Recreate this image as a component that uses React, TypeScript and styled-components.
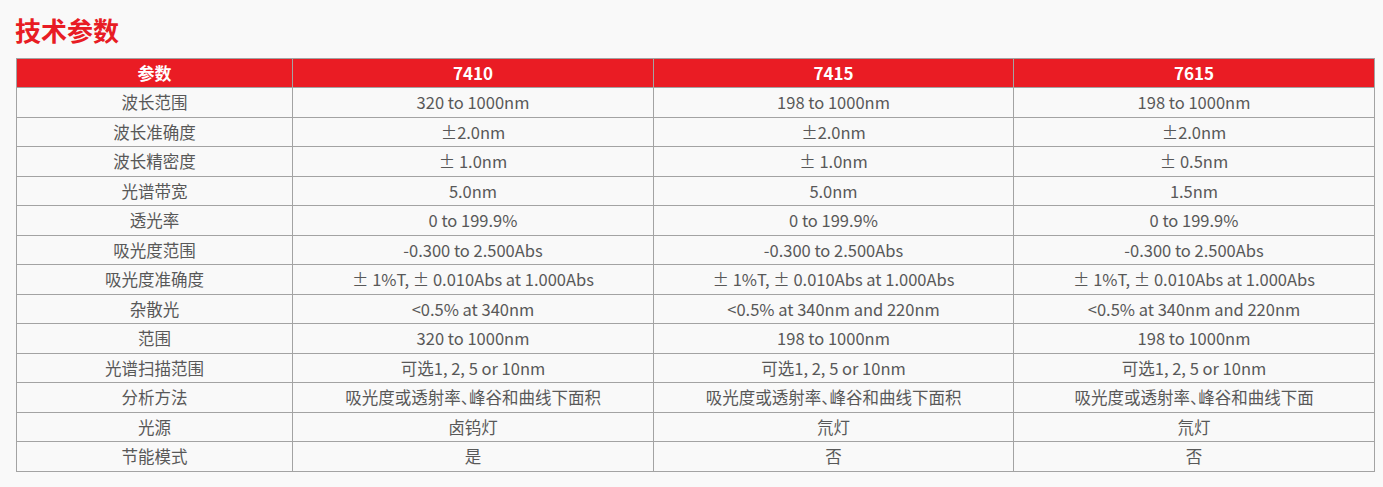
import React from 'react';
import styled, { createGlobalStyle } from 'styled-components';

const GlobalStyle = createGlobalStyle`
  html, body {
    margin: 0;
    padding: 0;
    background: #f9f9f9;
  }
  body {
    font-family: "Noto Sans CJK SC", "Noto Sans", sans-serif;
  }
`;

const models = ['7410', '7415', '7615'];
const colWidths = [276, 361, 360, 361];

const rows: [string, string, string, string][] = [
  ['波长范围', '320 to 1000nm', '198 to 1000nm', '198 to 1000nm'],
  ['波长准确度', '±2.0nm', '±2.0nm', '±2.0nm'],
  ['波长精密度', '± 1.0nm', '± 1.0nm', '± 0.5nm'],
  ['光谱带宽', '5.0nm', '5.0nm', '1.5nm'],
  ['透光率', '0 to 199.9%', '0 to 199.9%', '0 to 199.9%'],
  ['吸光度范围', '-0.300 to 2.500Abs', '-0.300 to 2.500Abs', '-0.300 to 2.500Abs'],
  ['吸光度准确度', '± 1%T, ± 0.010Abs at 1.000Abs', '± 1%T, ± 0.010Abs at 1.000Abs', '± 1%T, ± 0.010Abs at 1.000Abs'],
  ['杂散光', '<0.5% at 340nm', '<0.5% at 340nm and 220nm', '<0.5% at 340nm and 220nm'],
  ['范围', '320 to 1000nm', '198 to 1000nm', '198 to 1000nm'],
  ['光谱扫描范围', '可选1, 2, 5 or 10nm', '可选1, 2, 5 or 10nm', '可选1, 2, 5 or 10nm'],
  ['分析方法', '吸光度或透射率、峰谷和曲线下面积', '吸光度或透射率、峰谷和曲线下面积', '吸光度或透射率、峰谷和曲线下面'],
  ['光源', '卤钨灯', '氘灯', '氘灯'],
  ['节能模式', '是', '否', '否'],
];

const Page = styled.div`
  padding: 12px 10px 16px 16px;
`;

const Title = styled.h2`
  margin: 0 0 10px -1px;
  font-size: 26px;
  line-height: 36px;
  font-weight: 700;
  color: #e81c24;
`;

const SpecTable = styled.table`
  width: 1358px;
  border-collapse: collapse;
  table-layout: fixed;
  background: #f9f9f9;
`;

const Col = styled.col<{ $w: number }>`
  width: ${(p) => p.$w}px;
`;

const HeadCell = styled.th`
  background: #ea1c24;
  color: #ffffff;
  font-size: 17px;
  font-weight: 700;
  height: 28px;
  line-height: 28px;
  padding: 0;
  text-align: center;
  border: 1px solid #a3a3a3;
  border-left-color: #f5b5b8;
  &:first-child {
    border-left-color: #a3a3a3;
  }
`;

const Cell = styled.td`
  color: #585858;
  font-size: 16.5px;
  height: 28.5px;
  line-height: 24px;
  padding: 0;
  text-align: center;
  border: 1px solid #a3a3a3;
  white-space: nowrap;
  font-feature-settings: "halt";
`;

export default function App() {
  return (
    <Page>
      <GlobalStyle />
      <Title>技术参数</Title>
      <SpecTable>
        <colgroup>
          {colWidths.map((w, i) => (
            <Col key={i} $w={w} />
          ))}
        </colgroup>
        <thead>
          <tr>
            <HeadCell>参数</HeadCell>
            {models.map((m) => (
              <HeadCell key={m}>{m}</HeadCell>
            ))}
          </tr>
        </thead>
        <tbody>
          {rows.map((r) => (
            <tr key={r[0]}>
              {r.map((v, i) => (
                <Cell key={i}>{v}</Cell>
              ))}
            </tr>
          ))}
        </tbody>
      </SpecTable>
    </Page>
  );
}
